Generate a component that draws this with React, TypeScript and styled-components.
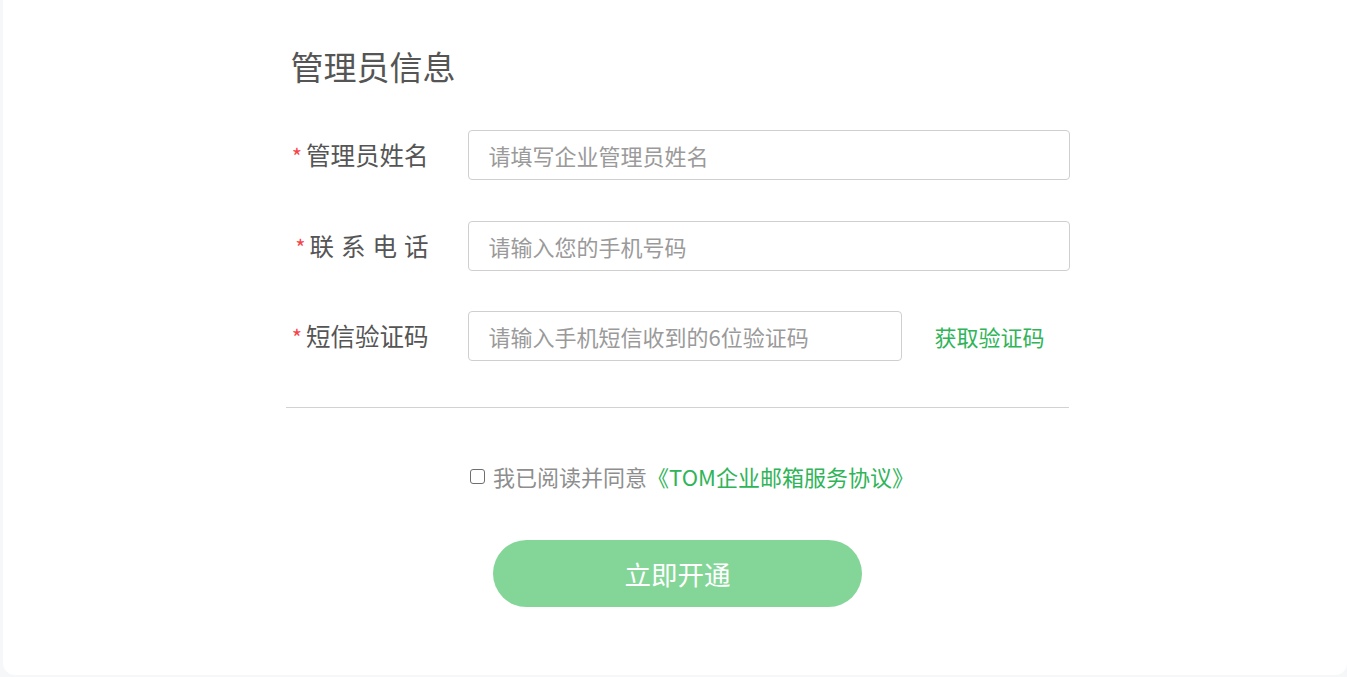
import React from "react";
import styled, { createGlobalStyle } from "styled-components";

const GlobalStyle = createGlobalStyle`
  html, body {
    margin: 0;
    padding: 0;
    background: #f6f7f9;
    overflow: hidden;
  }
  body {
    font-family: "Noto Sans CJK SC", "Noto Sans", sans-serif;
  }
  * { box-sizing: border-box; }
`;

const Page = styled.div`
  padding-left: 3px;
  width: 1347px;
  height: 677px;
`;

const Card = styled.div`
  background: #ffffff;
  width: 1344px;
  height: 675px;
  border-radius: 0 0 12px 12px;
  padding: 48px 0 0 5px;
`;

const Form = styled.div`
  width: 784px;
  margin: 0 auto;
  display: flex;
  flex-direction: column;
`;

const Title = styled.h2`
  margin: 0 0 0 5px;
  font-size: 33px;
  line-height: 36px;
  font-weight: 400;
  color: #555555;
`;

const Rows = styled.div`
  margin-top: 46px;
  display: flex;
  flex-direction: column;
  gap: 40.5px;
`;

const Row = styled.div`
  display: flex;
  align-items: center;
  height: 50px;
`;

const Label = styled.label<{ $spaced?: boolean }>`
  width: 143px;
  margin-right: 39px;
  text-align: right;
  font-size: 24.5px;
  line-height: 30px;
  color: #555555;
  white-space: pre;
  word-spacing: ${(p) => (p.$spaced ? "1.5px" : "0")};
`;

const Star = styled.span`
  color: #f5454b;
  font-size: 22px;
  margin-right: 4px;
  word-spacing: 0;
`;

const Input = styled.input<{ $w: number }>`
  width: ${(p) => p.$w}px;
  height: 50px;
  border: 1px solid #cfcfcf;
  border-radius: 4px;
  padding: 0 20px;
  font-family: "Noto Sans CJK SC", sans-serif;
  font-size: 22px;
  color: #333;
  outline: none;
  &::placeholder {
    color: #9a9a9a;
  }
`;

const CodeLink = styled.a`
  margin-left: 33px;
  font-size: 22px;
  color: #2fb458;
  text-decoration: none;
  cursor: pointer;
`;

const Divider = styled.hr`
  margin: 46px 0 0 0;
  border: none;
  border-top: 1px solid #d2d2d2;
  height: 0;
  width: 783px;
`;

const Agree = styled.div`
  margin-top: 56px;
  display: flex;
  align-items: center;
  justify-content: center;
  font-size: 22px;
  line-height: 24px;
  color: #8e8e8e;
  padding-left: 29px;
`;

const Check = styled.input`
  appearance: none;
  width: 15px;
  height: 15px;
  margin: 0 8px 0 0;
  border: 1.5px solid #6e6e6e;
  border-radius: 3px;
  background: #fff;
`;

const Protocol = styled.a`
  color: #2fb458;
  text-decoration: none;
  cursor: pointer;
`;

const Submit = styled.button`
  margin: 52px auto 0;
  width: 369px;
  height: 67px;
  border: none;
  border-radius: 34px;
  background: #84d698;
  color: #ffffff;
  font-family: "Noto Sans CJK SC", sans-serif;
  font-size: 26.5px;
  cursor: pointer;
`;

export default function App() {
  return (
    <>
      <GlobalStyle />
      <Page>
        <Card>
          <Form>
            <Title>管理员信息</Title>
            <Rows>
              <Row>
                <Label>
                  <Star>*</Star>管理员姓名
                </Label>
                <Input $w={602} placeholder="请填写企业管理员姓名" />
              </Row>
              <Row>
                <Label $spaced>
                  <Star>*</Star>联 系 电 话
                </Label>
                <Input $w={602} placeholder="请输入您的手机号码" />
              </Row>
              <Row>
                <Label>
                  <Star>*</Star>短信验证码
                </Label>
                <Input $w={434} placeholder="请输入手机短信收到的6位验证码" />
                <CodeLink>获取验证码</CodeLink>
              </Row>
            </Rows>
            <Divider />
            <Agree>
              <Check type="checkbox" />
              我已阅读并同意<Protocol>《TOM企业邮箱服务协议》</Protocol>
            </Agree>
            <Submit>立即开通</Submit>
          </Form>
        </Card>
      </Page>
    </>
  );
}
